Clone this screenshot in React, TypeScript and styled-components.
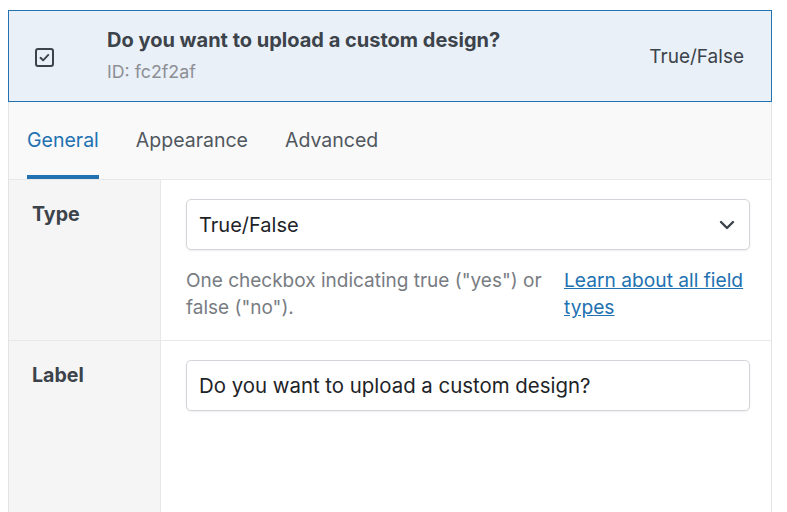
import styled, { createGlobalStyle } from "styled-components";

const GlobalStyle = createGlobalStyle`
  body {
    margin: 0;
    background: #ffffff;
    font-family: Inter, "Noto Sans", sans-serif;
    color: #3c434a;
  }
`;

const tabs = ["General", "Appearance", "Advanced"];

const CheckIcon = () => (
  <svg width="19" height="19" viewBox="0 0 19 19" fill="none">
    <rect x="1" y="1" width="17" height="17" rx="2" stroke="#3c434a" strokeWidth="2" />
    <path d="M5.5 9.8l2.6 2.5 5.2-5.4" stroke="#3c434a" strokeWidth="1.9" strokeLinecap="round" strokeLinejoin="round" />
  </svg>
);

const Chevron = () => (
  <svg width="16" height="10" viewBox="0 0 16 10" fill="none">
    <path d="M2 2l6 6 6-6" stroke="#3c434a" strokeWidth="2.4" strokeLinecap="round" strokeLinejoin="round" />
  </svg>
);

const App = () => {
  return (
    <>
      <GlobalStyle />
      <Panel>
        <FieldHeader>
          <IconCell>
            <CheckIcon />
          </IconCell>
          <TitleBlock>
            <Title>Do you want to upload a custom design?</Title>
            <FieldId>ID: fc2f2af</FieldId>
          </TitleBlock>
          <TypeName>True/False</TypeName>
        </FieldHeader>
        <TabBar>
          {tabs.map((tab, index) => (
            <Tab key={tab} active={index === 0}>
              {tab}
            </Tab>
          ))}
        </TabBar>
        <SettingRow>
          <LabelCell>Type</LabelCell>
          <InputCell>
            <Select>
              <span>True/False</span>
              <Chevron />
            </Select>
            <Help>
              <Description>One checkbox indicating true ("yes") or false ("no").</Description>
              <HelpLink href="#">Learn about all field types</HelpLink>
            </Help>
          </InputCell>
        </SettingRow>
        <SettingRow last>
          <LabelCell>Label</LabelCell>
          <InputCell>
            <TextInput>Do you want to upload a custom design?</TextInput>
          </InputCell>
        </SettingRow>
      </Panel>
    </>
  );
};

export default App;

const Panel = styled.div`
  margin: 10px 0 0 8px;
  width: 764px;
  border-left: 1px solid #e2e4e7;
  border-right: 1px solid #e2e4e7;
  box-sizing: border-box;
`;

const FieldHeader = styled.div`
  height: 92px;
  margin: 0 -1px;
  box-sizing: border-box;
  background: #e9f0f8;
  border: 1px solid #2271b1;
  display: flex;
  align-items: center;
  padding: 0 27px 0 26px;
`;

const IconCell = styled.div`
  width: 72px;
  display: flex;
  align-items: center;
  margin-top: 2px;
`;

const TitleBlock = styled.div`
  flex: 1;
  display: flex;
  flex-direction: column;
  gap: 9px;
  margin-top: -3px;
`;

const Title = styled.div`
  font-size: 20px;
  font-weight: 700;
  color: #3c434a;
`;

const FieldId = styled.div`
  font-size: 17.8px;
  color: #8c8f94;
`;

const TypeName = styled.div`
  font-size: 19px;
  color: #3c434a;
`;

const TabBar = styled.div`
  height: 78px;
  box-sizing: border-box;
  background: #f9f9f9;
  border-bottom: 1px solid #e8e8e8;
  display: flex;
  align-items: stretch;
  gap: 37px;
  padding-left: 18px;
`;

const Tab = styled.div<{ active?: boolean }>`
  display: flex;
  align-items: center;
  padding-top: 2px;
  font-size: 19.5px;
  color: ${(props) => (props.active ? "#2271b1" : "#50575e")};
  border-bottom: 4px solid ${(props) => (props.active ? "#2271b1" : "transparent")};
`;

const SettingRow = styled.div<{ last?: boolean }>`
  display: flex;
  border-bottom: ${(props) => (props.last ? "none" : "1px solid #e8e8e8")};
  min-height: ${(props) => (props.last ? "172px" : "auto")};
`;

const LabelCell = styled.div`
  width: 152px;
  flex-shrink: 0;
  box-sizing: border-box;
  background: #f5f5f5;
  border-right: 1px solid #e8e8e8;
  padding: 22px 0 0 23px;
  font-size: 19.6px;
  font-weight: 700;
  color: #3c434a;
`;

const InputCell = styled.div`
  flex: 1;
  padding: 19px 21px 19px 25px;
`;

const Select = styled.div`
  height: 51px;
  box-sizing: border-box;
  border: 1px solid #d4d4da;
  border-radius: 5px;
  box-shadow: 0 1px 2px rgba(16, 24, 40, 0.08);
  display: flex;
  align-items: center;
  justify-content: space-between;
  padding: 0 14px 0 12px;
  font-size: 20px;
  color: #1d2327;
`;

const Help = styled.div`
  display: grid;
  grid-template-columns: 1fr 186px;
  gap: 19px;
  margin-top: 17px;
`;

const Description = styled.p`
  margin: 0;
  font-size: 19px;
  line-height: 27px;
  color: #787c82;
`;

const HelpLink = styled.a`
  font-size: 19.2px;
  line-height: 27px;
  color: #2271b1;
  text-decoration: underline;
`;

const TextInput = styled.div`
  height: 51px;
  box-sizing: border-box;
  border: 1px solid #d4d4da;
  border-radius: 5px;
  box-shadow: 0 1px 2px rgba(16, 24, 40, 0.08);
  display: flex;
  align-items: center;
  padding: 0 12px;
  font-size: 20.4px;
  color: #1d2327;
`;
